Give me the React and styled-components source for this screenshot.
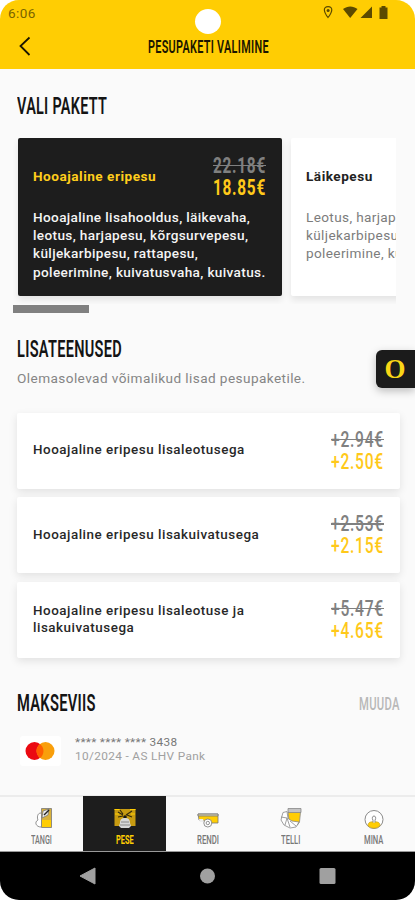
import React, { useLayoutEffect, useRef, useState } from "react";
import styled, { createGlobalStyle, css } from "styled-components";

const Global = createGlobalStyle`
  * { box-sizing: border-box; }
  body { margin: 0; background: #fff; font-family: Roboto, "Liberation Sans", sans-serif; }
  h1, h2, p { margin: 0; font-weight: inherit; }
  button { border: 0; background: none; padding: 0; font: inherit; color: inherit; }
`;

const Slot = styled.span`
  display: block;
  width: ${(p) => p.$width}px;
  white-space: nowrap;
  flex: none;
`;
const Stretch = styled.span`
  display: inline-block;
  vertical-align: top;
  transform-origin: 0 50%;
`;

/* Condensed lettering: squeezes a line of text to the given width. */
function Narrow({ width, children }) {
  const ref = useRef(null);
  const [scale, setScale] = useState(1);
  useLayoutEffect(() => {
    setScale(width / ref.current.offsetWidth);
  }, [width, children]);
  return (
    <Slot $width={width}>
      <Stretch ref={ref} style={{ transform: `scaleX(${scale})` }}>
        {children}
      </Stretch>
    </Slot>
  );
}

const Screen = styled.div`
  width: 415px;
  height: 900px;
  display: flex;
  flex-direction: column;
  background: #fafafa;
  border-radius: 19px;
  overflow: hidden;
  position: relative;
`;

const Header = styled.header`
  height: 69px;
  background: #ffcd03;
  flex: none;
`;
const StatusBar = styled.div`
  height: 27px;
  display: flex;
  align-items: flex-start;
  justify-content: space-between;
  padding: 5px 24px 0 8px;
  color: #7a6400;
  font-size: 13.5px;
  letter-spacing: 0.4px;
  line-height: 17px;
`;
const StatusIcons = styled.svg`
  width: 68px;
  height: 16px;
`;
const Camera = styled.i`
  position: absolute;
  left: 195px;
  top: 9px;
  width: 26px;
  height: 25px;
  border-radius: 50%;
  background: #fff;
`;
const TitleBar = styled.div`
  height: 40px;
  display: grid;
  grid-template-columns: 148px 1fr;
  align-items: center;
`;
const BackButton = styled.button`
  padding-left: 18px;
  display: flex;
  svg { width: 14px; height: 22px; }
`;
const Title = styled.h1`
  font-size: 18.5px;
  line-height: 24px;
  font-weight: 600;
  letter-spacing: 0.5px;
  color: #1b1600;
`;

const Main = styled.main`
  flex: 1;
  padding: 24px 15px 0 17px;
`;
const Heading = styled.h2`
  font-size: 24.5px;
  line-height: 25px;
  font-weight: 600;
  letter-spacing: 0.5px;
  color: #141414;
`;

const Packages = styled.div`
  display: flex;
  gap: 9.5px;
  width: 383px;
  height: 166px;
  margin: 20px 0 0 -4px;
  padding: 0 0 8px 5px;
  overflow: hidden;
`;
const PackageCard = styled.article`
  flex: none;
  width: 263.5px;
  padding: 16px 16px 0 15px;
  border-radius: 2px;
  box-shadow: 0 4px 7px rgba(0, 0, 0, 0.09);
  background: ${(p) => (p.$active ? "#1d1d1d" : "#fff")};
  color: ${(p) => (p.$active ? "#f4f4f4" : "#7c7c7c")};
`;
const PackageTop = styled.div`
  display: flex;
  justify-content: space-between;
  align-items: center;
  height: 45px;
`;
const PackageName = styled.p`
  padding-bottom: 2px;
  font-size: 13.6px;
  letter-spacing: 0.5px;
  font-weight: 700;
  color: ${(p) => (p.$active ? "#ffcd1c" : "#222")};
`;
const PackageText = styled.p`
  margin-top: 9px;
  font-size: 13.6px;
  line-height: 18.2px;
  letter-spacing: 0.36px;
  font-weight: ${(p) => (p.$active ? 500 : 400)};
  white-space: pre;
`;
const Prices = styled.div`
  font-size: 21.5px;
  line-height: 22px;
  letter-spacing: 1px;
  font-weight: ${(p) => (p.$bold ? 700 : 500)};
`;
const Price = styled.div`
  position: relative;
  color: ${(p) => (p.$old ? "#808080" : "#ffc91a")};
  ${(p) =>
    p.$old &&
    css`
      &::after {
        content: "";
        position: absolute;
        left: 0;
        right: 0;
        top: 10px;
        height: 1.5px;
        background: #808080;
      }
    `}
`;
const ScrollThumb = styled.div`
  width: 76px;
  height: 8px;
  margin: 0.5px 0 23.5px -4px;
  background: #808080;
`;

const Subtitle = styled.p`
  margin-top: 8.5px;
  font-size: 13.6px;
  line-height: 17px;
  letter-spacing: 0.42px;
  color: #858585;
`;
const Extras = styled.div`
  display: grid;
  grid-auto-rows: 76.3px;
  gap: 8.3px;
  margin: 26px 0 32.3px;
`;
const ExtraCard = styled.article`
  display: flex;
  align-items: center;
  justify-content: space-between;
  padding: 0 16px;
  border-radius: 2px;
  background: #fff;
  box-shadow: 0 3px 8px rgba(0, 0, 0, 0.1);
`;
const ExtraName = styled.p`
  white-space: pre;
  font-size: 13.4px;
  line-height: 16.5px;
  letter-spacing: 0.53px;
  font-weight: 500;
  color: #282828;
`;

const PaymentHead = styled.div`
  display: flex;
  justify-content: space-between;
`;
const ChangeButton = styled.button`
  display: block;
  font-size: 19px;
  line-height: 28px;
  letter-spacing: 0.5px;
  font-weight: 500;
  color: #b8b8b8;
`;
const PaymentRow = styled.div`
  display: flex;
  align-items: flex-start;
  gap: 14px;
  margin: 18px 0 0 3px;
`;
const CardLogo = styled.div`
  width: 41px;
  height: 30px;
  border-radius: 3px;
  background: #fff;
  svg { display: block; width: 41px; height: 30px; }
`;
const PaymentText = styled.p`
  margin-top: -1px;
  font-size: 11.8px;
  line-height: 14px;
  letter-spacing: 0.36px;
  color: #a0a0a0;
  strong { display: block; font-weight: 400; color: #777; letter-spacing: 0.32px; }
`;

const ChatTab = styled.button`
  position: absolute;
  right: 0;
  top: 350px;
  width: 39px;
  height: 38px;
  padding-right: 1px;
  border-radius: 6px 0 0 6px;
  background: #1b1b1b;
  box-shadow: 0 3px 8px rgba(0, 0, 0, 0.25);
  font: bold 27px/37px "Liberation Serif", serif;
  color: #f9d616;
`;

const Tabs = styled.nav`
  height: 57px;
  flex: none;
  display: grid;
  grid-template-columns: repeat(5, 1fr);
  border-top: 2px solid #ececec;
  border-bottom: 1px solid #999;
`;
const Tab = styled.button`
  display: flex;
  flex-direction: column;
  align-items: center;
  padding-top: 9px;
  margin-top: ${(p) => (p.$active ? "-1px" : "0")};
  background: ${(p) => (p.$active ? "#1d1d1d" : "transparent")};
  color: ${(p) => (p.$active ? "#ffcd03" : "#777")};
  font-size: 12px;
  line-height: 13px;
  font-weight: ${(p) => (p.$active ? 700 : 500)};
  svg { width: 26px; height: 24px; margin-bottom: ${(p) => (p.$active ? "5px" : "4px")}; }
`;
const SystemNav = styled.div`
  height: 48px;
  flex: none;
  background: #000;
  display: flex;
  align-items: center;
  justify-content: space-between;
  padding: 0 79px;
  svg { width: 17px; height: 18px; }
`;

function PriceBlock({ old, now, bold }) {
  return (
    <Prices $bold={bold}>
      <Price $old><Narrow width={53}>{old}</Narrow></Price>
      <Price><Narrow width={53}>{now}</Narrow></Price>
    </Prices>
  );
}

const PumpIcon = () => (
  <svg viewBox="0 0 26 24" fill="none" stroke="#777" strokeWidth=".8">
    <path d="M12.500 2.500h10v19h-10z" fill="#d8b13c" />
    <path d="M13 14h9v7h-9z" fill="#ffcd03" stroke="none" />
    <path d="M14 5l6-2-1 6-6 3z" fill="#eee" />
    <path d="m15 9 5-5" stroke="#222" strokeWidth="1.500" />
    <path d="M12 7c-4 0-4 5-3 7-4 2-2 7 3 7" fill="#fff" />
  </svg>
);
const WashIcon = () => (
  <svg viewBox="0 0 26 24" fill="none">
    <path d="M2.500 4h21v17h-21z" fill="#c79b11" />
    <path d="M2.500 4.500h5M18 4.500h5.500M3 9h4M19 9h4" stroke="#ffcd03" />
    <path d="M6 7l5 3M8 5l3 4M20 6l-6 4M6 12l5-1M20 12l-5-2" stroke="#332a0c" strokeWidth="1.100" />
    <circle cx="13" cy="12" r="1.800" fill="#161616" />
    <path d="M8 18c0-4 2-5 5-5s5 1 5 5l1 3-2 2H9l-2-2z" fill="#d5d7d8" />
    <path d="M9 17h8M8 20h10" stroke="#888" />
  </svg>
);
const TrailerIcon = () => (
  <svg viewBox="0 0 26 24" fill="none" stroke="#777" strokeWidth=".8">
    <path d="M3 8h20v9H10L8 14H4z" fill="#ffcd03" />
    <path d="M3 8h20v2H3z" fill="#d5cda9" />
    <path d="M4 13h4l1 3H5z" fill="#eee" stroke="none" />
    <circle cx="12.800" cy="17" r="4" fill="#fff" />
    <circle cx="12.800" cy="17" r="1.700" />
  </svg>
);
const FoodIcon = () => (
  <svg viewBox="0 0 26 24" fill="none" stroke="#888" strokeWidth=".8">
    <path d="M10 6h12.500l-1 10-2 3-8-1z" fill="#ffcd03" />
    <path d="M10 2.500h13v4H10z" fill="#c4c4c4" />
    <path d="M5 6.500l4-1 1 7 4 2.500 7 1-3 5-6 1-6-3-3-5 1-4z" fill="#fff" />
    <path d="M3 11l6 1-2 7M9 12l3 9M12 15l6 5" />
  </svg>
);
const UserIcon = () => (
  <svg viewBox="0 0 26 24" fill="none" stroke="#8a8a8a">
    <circle cx="13" cy="13.500" r="9" fill="#fff" />
    <path d="M7 19.500c0-3.500 3-4 6-3.500 3-.5 6 0 6 3.500-3 3.500-9 3.500-12 0" fill="#ffcd03" stroke="#c9a422" strokeWidth=".7" />
    <path d="M12 16.500v-2c-3-6 5-6 2 0v2" fill="#fff" />
  </svg>
);

const extras = [
  ["Hooajaline eripesu lisaleotusega", "+2.94€", "+2.50€"],
  ["Hooajaline eripesu lisakuivatusega", "+2.53€", "+2.15€"],
  ["Hooajaline eripesu lisaleotuse ja\nlisakuivatusega", "+5.47€", "+4.65€"],
];
const tabs = [
  ["TANGI", 21, PumpIcon],
  ["PESE", 18, WashIcon],
  ["RENDI", 22, TrailerIcon],
  ["TELLI", 19, FoodIcon],
  ["MINA", 19, UserIcon],
];

export default function App() {
  return (
    <>
      <Global />
      <Screen>
        <Header>
          <StatusBar>
            <span>6:06</span>
            <StatusIcons viewBox="0 0 68 16" fill="#5c4a00">
              <path d="M5.100 1.700c-5.400 0-4.500 5-.1 10.800 4.600-5.800 5.400-10.800.1-10.800z" fill="none" stroke="#5c4a00" strokeWidth="1.200" />
              <circle cx="5.100" cy="5.500" r="1.500" />
              <path d="M20 4c4.500-3.500 10-3.500 14.500 0L27.200 13z" />
              <path d="M49 1.500V13H37.500z" />
              <path d="M56.500 2.500h2V1h4v1.500h2V14h-8z" />
            </StatusIcons>
          </StatusBar>
          <TitleBar>
            <BackButton aria-label="Tagasi">
              <svg viewBox="0 0 14 22" fill="none" stroke="#1b1600" strokeWidth="1.800">
                <path d="M11.500 1.500 2.500 10 11.500 19" />
              </svg>
            </BackButton>
            <Title><Narrow width={121}>PESUPAKETI VALIMINE</Narrow></Title>
          </TitleBar>
        </Header>
        <Camera />
        <Main>
          <Heading><Narrow width={90}>VALI PAKETT</Narrow></Heading>
          <Packages>
            <PackageCard $active>
              <PackageTop>
                <PackageName $active>Hooajaline eripesu</PackageName>
                <PriceBlock bold old="22.18€" now="18.85€" />
              </PackageTop>
              <PackageText $active>
                {"Hooajaline lisahooldus, läikevaha,\nleotus, harjapesu, kõrgsurvepesu,\nküljekarbipesu, rattapesu,\npoleerimine, kuivatusvaha, kuivatus."}
              </PackageText>
            </PackageCard>
            <PackageCard>
              <PackageTop>
                <PackageName>Läikepesu</PackageName>
              </PackageTop>
              <PackageText>{"Leotus, harjapesu,\nküljekarbipesu,\npoleerimine, kuivatus."}</PackageText>
            </PackageCard>
          </Packages>
          <ScrollThumb />
          <Heading><Narrow width={105}>LISATEENUSED</Narrow></Heading>
          <Subtitle>Olemasolevad võimalikud lisad pesupaketile.</Subtitle>
          <Extras>
            {extras.map(([name, old, now]) => (
              <ExtraCard key={name}>
                <ExtraName>{name}</ExtraName>
                <PriceBlock old={old} now={now} />
              </ExtraCard>
            ))}
          </Extras>
          <PaymentHead>
            <Heading><Narrow width={79}>MAKSEVIIS</Narrow></Heading>
            <ChangeButton><Narrow width={41}>MUUDA</Narrow></ChangeButton>
          </PaymentHead>
          <PaymentRow>
            <CardLogo>
              <svg viewBox="0 0 41 30">
                <circle cx="14.500" cy="15" r="9" fill="#eb0a12" />
                <circle cx="25.500" cy="15" r="9" fill="#f99f0b" />
                <path d="M20 7.900a9 9 0 0 1 0 14.200 9 9 0 0 1 0-14.200" fill="#ff5f00" />
              </svg>
            </CardLogo>
            <PaymentText>
              <strong>**** **** **** 3438</strong>
              10/2024 - AS LHV Pank
            </PaymentText>
          </PaymentRow>
        </Main>
        <ChatTab>O</ChatTab>
        <Tabs>
          {tabs.map(([label, width, Icon]) => (
            <Tab key={label} $active={label === "PESE"}>
              <Icon />
              <Narrow width={width}>{label}</Narrow>
            </Tab>
          ))}
        </Tabs>
        <SystemNav>
          <svg viewBox="0 0 17 18" fill="#a0a0a0"><path d="M16 1v16L1 9z" stroke="#a0a0a0" strokeLinejoin="round" /></svg>
          <svg viewBox="0 0 17 18" fill="#a0a0a0"><circle cx="8.500" cy="9" r="7.500" /></svg>
          <svg viewBox="0 0 17 18" fill="#a0a0a0"><rect x=".5" y="1" width="16" height="16" rx="1.500" /></svg>
        </SystemNav>
      </Screen>
    </>
  );
}
